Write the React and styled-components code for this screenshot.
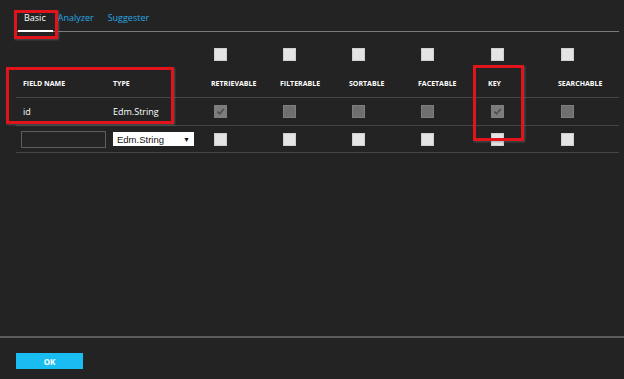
import React from "react";
import styled, { createGlobalStyle } from "styled-components";

const GlobalStyle = createGlobalStyle`
  html, body {
    margin: 0;
    padding: 0;
    background: #232323;
  }
  body {
    font-family: "Open Sans", "Noto Sans", sans-serif;
    color: #fff;
  }
`;

const columns = ["RETRIEVABLE", "FILTERABLE", "SORTABLE", "FACETABLE", "KEY", "SEARCHABLE"];
const idRow = [true, false, false, false, true, false];

function Box({ variant, checked }) {
  return (
    <Check $variant={variant} $checked={checked}>
      {checked && (
        <svg width="9" height="9" viewBox="0 0 10 10">
          <path d="M1.5 5.2 L4 7.6 L8.6 2.2" fill="none" stroke="#4e4e4e" strokeWidth="1.8" />
        </svg>
      )}
    </Check>
  );
}

function App() {
  return (
    <Page>
      <GlobalStyle />
      <Tabs>
        <Tab $active>Basic</Tab>
        <Tab>Analyzer</Tab>
        <Tab>Suggester</Tab>
      </Tabs>
      <Table>
        <SelectAllRow>
          <Cell />
          <Cell />
          {columns.map((c) => (
            <Cell key={c}>
              <Box variant="light" />
            </Cell>
          ))}
        </SelectAllRow>
        <HeaderRow>
          <Cell $first>FIELD NAME</Cell>
          <Cell>TYPE</Cell>
          {columns.map((c) => (
            <Cell key={c}>{c}</Cell>
          ))}
        </HeaderRow>
        <DataRow>
          <Cell $first>id</Cell>
          <Cell>Edm.String</Cell>
          {idRow.map((on, i) => (
            <Cell key={i}>
              <Box variant="dim" checked={on} />
            </Cell>
          ))}
        </DataRow>
        <DataRow $h={26}>
          <Cell $input>
            <NameInput />
          </Cell>
          <Cell>
            <TypeSelect>
              <span>Edm.String</span>
              <span>▼</span>
            </TypeSelect>
          </Cell>
          {columns.map((c) => (
            <Cell key={c}>
              <Box variant="light" />
            </Cell>
          ))}
        </DataRow>
      </Table>
      <Spacer />
      <Footer>
        <OkButton>OK</OkButton>
      </Footer>
      <Callout $x={14} $y={10} $w={44} $h={29} />
      <Callout $x={6} $y={67} $w={168} $h={57} />
      <Callout $x={473} $y={65} $w={51} $h={76} />
    </Page>
  );
}

const Page = styled.div`
  position: relative;
  width: 624px;
  height: 379px;
  display: flex;
  flex-direction: column;
  background: #232323;
  overflow: hidden;
`;

const Tabs = styled.div`
  display: flex;
  align-items: flex-end;
  margin: 0 5px 0 16px;
  height: 31px;
  border-bottom: 1px solid #7a7a7a;
`;

const Tab = styled.div`
  font-size: 9px;
  line-height: 12px;
  padding: 0 7px 6px 7px;
  margin-left: ${(p) => (p.$active ? "2px" : "0")};
  color: ${(p) => (p.$active ? "#fff" : "#27a8e6")};
  border-bottom: 2px solid ${(p) => (p.$active ? "#fff" : "transparent")};
  margin-bottom: -1px;
  &:first-child {
    padding-left: 6px;
  }
  &:nth-child(2) {
    padding-left: 5px;
  }
`;

const Table = styled.div`
  margin: 0 5px 0 16px;
  display: flex;
  flex-direction: column;
`;

const Row = styled.div`
  display: grid;
  grid-template-columns: 97px 98px 69px 69px 69px 70px 70px 1fr;
  align-items: center;
`;

const SelectAllRow = styled(Row)`
  margin-top: 15px;
  height: 14px;
`;

const HeaderRow = styled(Row)`
  height: 37px;
  align-items: end;
  padding-bottom: 9px;
  box-sizing: border-box;
  border-bottom: 1px solid #454545;
  font-size: 7px;
  font-weight: 700;
`;

const DataRow = styled(Row)`
  height: ${(p) => p.$h || 27}px;
  border-bottom: 1px solid #454545;
  font-size: 9px;
`;

const Cell = styled.div`
  display: flex;
  align-items: center;
  padding-left: ${(p) => (p.$first ? "7px" : p.$input ? "5px" : "0")};
  white-space: nowrap;
`;

const Check = styled.div`
  width: 13px;
  height: 13px;
  margin-left: 3px;
  box-sizing: border-box;
  display: flex;
  align-items: center;
  justify-content: center;
  background: ${(p) =>
    p.$variant === "dim" ? (p.$checked ? "#7c7c7c" : "#6f6f6f") : "#e4e4e4"};
  border: 1px solid ${(p) => (p.$variant === "dim" ? "#7e7e7e" : "#cfcfcf")};
`;

const NameInput = styled.div`
  width: 85px;
  height: 17px;
  box-sizing: border-box;
  border: 1px solid #5e5e5e;
  background: #252525;
`;

const TypeSelect = styled.div`
  width: 81px;
  height: 14px;
  box-sizing: border-box;
  display: flex;
  align-items: center;
  justify-content: space-between;
  padding: 0 4px;
  background: #fff;
  color: #111;
  font-family: "Liberation Sans", Arial, sans-serif;
  font-size: 9.5px;
  span:last-child {
    font-size: 7px;
  }
`;

const Spacer = styled.div`
  flex: 1;
`;

const Footer = styled.div`
  height: 43px;
  border-top: 2px solid #5c5c5c;
  padding: 15px 0 0 16px;
  box-sizing: border-box;
`;

const OkButton = styled.div`
  width: 67px;
  height: 16px;
  background: #19bdf2;
  color: #fff;
  font-size: 8px;
  font-weight: 700;
  display: flex;
  align-items: center;
  justify-content: center;
`;

const Callout = styled.div`
  position: absolute;
  left: ${(p) => p.$x}px;
  top: ${(p) => p.$y}px;
  width: ${(p) => p.$w}px;
  height: ${(p) => p.$h}px;
  box-sizing: border-box;
  border: 3px solid #e1141c;
  box-shadow: 1px 1px 2px rgba(120, 120, 120, 0.5);
`;

export default App;
